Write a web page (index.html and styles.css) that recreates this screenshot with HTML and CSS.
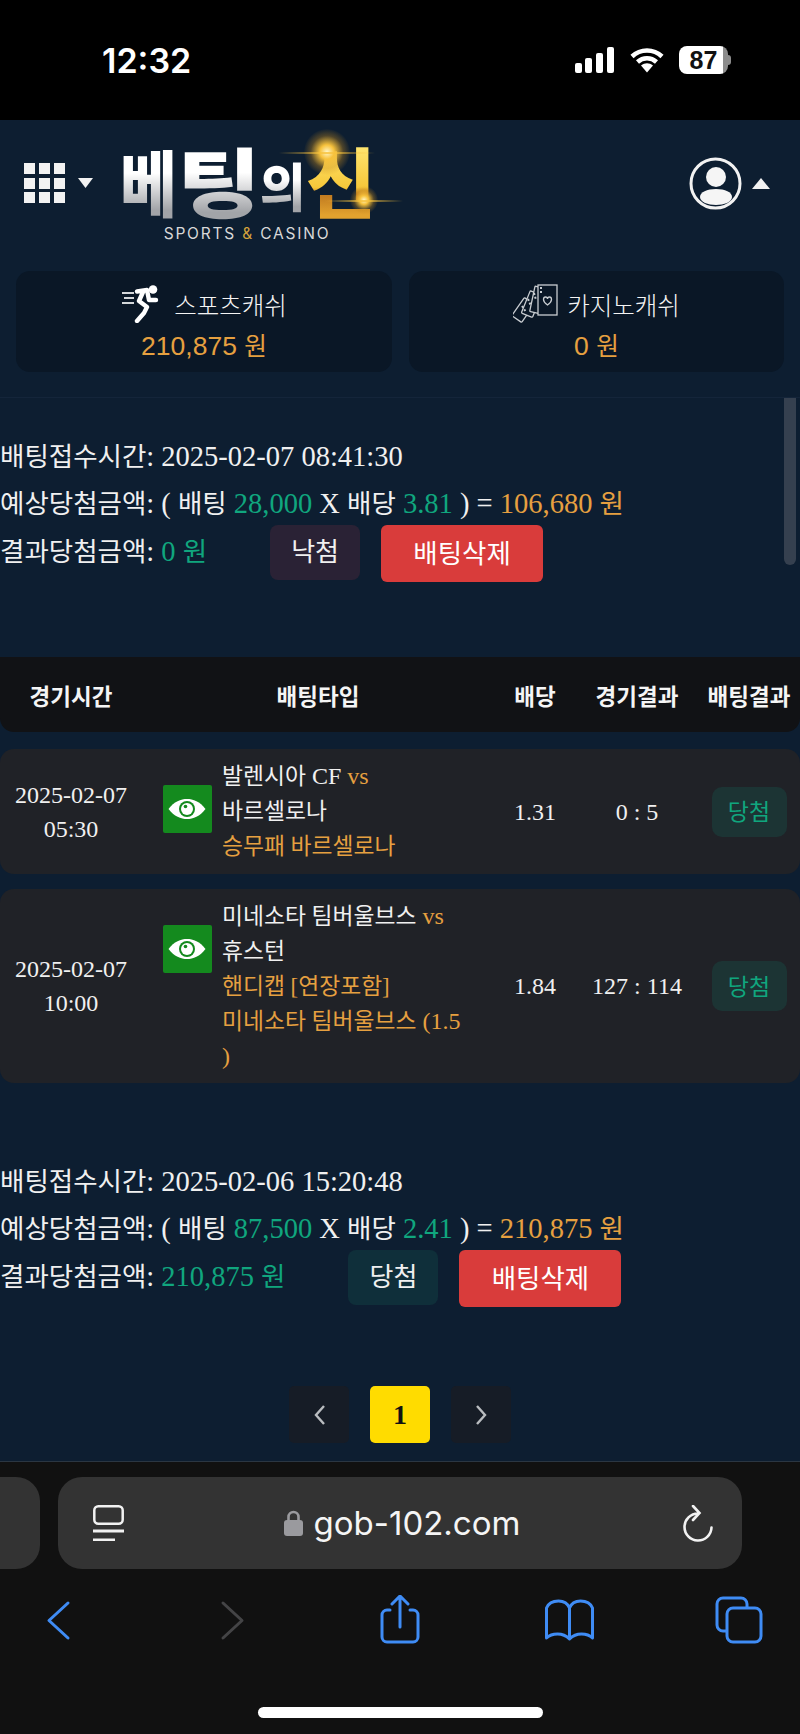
FILE: index.html
```html
<!DOCTYPE html>
<html lang="ko">
<head>
    <meta charset="UTF-8">
    <meta name="viewport" content="width=device-width, initial-scale=1.0">
    <title>베팅의 신 - 배팅내역</title>
    <link rel="stylesheet" href="styles.css">
</head>
<body>
    <div class="status-bar">
        <span class="clock">12:32</span>
        <div class="status-icons">
            <svg class="signal" width="39" height="26" viewBox="0 0 39 26"><rect x="0" y="16" width="7" height="10" rx="2"/><rect x="10" y="11" width="7" height="15" rx="2"/><rect x="21" y="6" width="7" height="20" rx="2"/><rect x="32" y="0" width="7" height="26" rx="2"/></svg>
            <svg class="wifi" width="34" height="26" viewBox="0 0 34 26"><path d="M2 9.500C10.500 1.500 23.500 1.500 32 9.500M7.500 15C13 10 21 10 26.500 15"/><path class="wifi-dot" d="M11 18.500C15 15.500 19 15.500 23 18.500L17 25.500Z"/></svg>
            <div class="battery"><span class="battery-level">87</span><i class="battery-cap"></i></div>
        </div>
    </div>

    <header class="top">
        <div class="menu">
            <svg width="41" height="40" viewBox="0 0 41 40"><path fill="#f2f2f2" d="M0 0h11v11H0zM15 0h11v11H15zM30 0h11v11H30zM0 15h11v11H0zM15 15h11v11H15zM30 15h11v11H30zM0 29h11v11H0zM15 29h11v11H15zM30 29h11v11H30z"/></svg>
            <svg width="15" height="10" viewBox="0 0 15 10"><path fill="#f2f2f2" d="M0 0h15L7.500 10z"/></svg>
        </div>
        <div class="logo">
            <div class="logo-word">
                <span class="lg lg-be">베</span><span class="lg lg-ting">팅</span><span class="lg lg-ui">의</span><span class="lg lg-sin">신</span>
            </div>
            <div class="logo-sub">SPORTS <b>&amp;</b> CASINO</div>
            <i class="spark spark-a"></i>
            <i class="spark spark-b"></i>
        </div>
        <div class="account">
            <svg width="53" height="53" viewBox="0 0 53 53"><circle cx="26.500" cy="26.500" r="24.500" fill="none" stroke="#f2f2f2" stroke-width="3"/><circle cx="27" cy="20" r="10" fill="#f5f5f5"/><path fill="#f5f5f5" d="M11 40c0-5 7-8 16-8s16 3 16 8c0 5-8 8-16 8s-16-3-16-8z"/></svg>
            <svg width="18" height="11" viewBox="0 0 18 11"><path fill="#f2f2f2" d="M0 11h18L9 0z"/></svg>
        </div>
    </header>

    <section class="wallet">
        <div class="wallet-card">
            <div class="wallet-label">
                <svg class="runner" width="38" height="38" viewBox="0 0 38 38"><circle cx="32" cy="4.500" r="4.300" fill="#fff"/><path fill="none" stroke="#fff" stroke-width="4.400" stroke-linejoin="round" stroke-linecap="round" d="M16 6.500l10-1.500 2 10h7M22 7l-4 9 8 6-3 6-7 8"/><path fill="none" stroke="#d4d7da" stroke-width="2" d="M1 8h12M3 13h10M1 18h12"/></svg>
                <span>스포츠캐쉬</span>
            </div>
            <div class="wallet-value">210,875 <span class="ko">원</span></div>
        </div>
        <div class="wallet-card">
            <div class="wallet-label">
                <svg class="cards" width="45" height="40" viewBox="0 0 45 40"><g fill="#0a1726" stroke="#c9cdd1" stroke-width="1.300"><rect x="-6" y="-11" width="12" height="22" rx="1" transform="translate(10 26) rotate(35)"/><rect x="-6" y="-13" width="12" height="24" rx="1" transform="translate(18 21) rotate(22)"/><rect x="-6" y="-14" width="12" height="26" rx="1" transform="translate(25 17) rotate(12)"/><rect x="25" y="1" width="19" height="30"/></g><path fill="none" stroke="#c9cdd1" stroke-width="1.300" d="M34.500 21c-6-4-4-8-2-8 1 0 2 1 2 2 0-1 1-2 2-2 2 0 4 4-2 8z"/><path stroke="#c9cdd1" stroke-width="2" stroke-dasharray="2 2" d="M28 3v6M9 22l4 6M15 15l3 7M21 9l2 7"/></svg>
                <span>카지노캐쉬</span>
            </div>
            <div class="wallet-value">0 <span class="ko">원</span></div>
        </div>
    </section>

    <main class="content">
        <div class="scrollbar"></div>

        <section class="bet-info">
            <p class="bet-line"><span class="ko">배팅접수시간</span>: 2025-02-07 08:41:30</p>
            <p class="bet-line"><span class="ko">예상당첨금액</span>: ( <span class="ko">배팅</span> <em class="green">28,000</em> X <span class="ko">배당</span> <em class="green">3.81</em> ) = <em class="orange">106,680 <span class="ko">원</span></em></p>
            <div class="bet-result">
                <p class="bet-line tall"><span class="ko">결과당첨금액</span>: <em class="green">0 <span class="ko">원</span></em></p>
                <span class="tag tag-lose">낙첨</span>
                <button class="del-btn">배팅삭제</button>
            </div>
        </section>

        <div class="table-head">
            <span>경기시간</span><span>배팅타입</span><span>배당</span><span>경기결과</span><span>배팅결과</span>
        </div>

        <div class="match">
            <div class="match-time">2025-02-07<br>05:30</div>
            <div class="match-type">
                <svg class="eye" width="49" height="48" viewBox="0 0 49 48"><rect width="49" height="48" rx="2" fill="#148a1e"/><path fill="#fff" d="M5.500 24C11 16.500 18 14 24 14s13 2.500 18.500 10C37 31.500 30 34 24 34S11 31.500 5.500 24z"/><circle cx="24" cy="24" r="8" fill="#148a1e"/><circle cx="24" cy="24" r="6" fill="#fff"/><circle cx="22.500" cy="21.500" r="1.800" fill="#148a1e"/></svg>
                <div class="match-names">
                    <span class="ko">발렌시아</span> CF <em class="orange">vs</em><br>
                    <span class="ko">바르셀로나</span><br>
                    <span class="orange"><span class="ko">승무패 바르셀로나</span></span>
                </div>
            </div>
            <div class="match-num">1.31</div>
            <div class="match-num">0 : 5</div>
            <div class="match-badge"><span class="tag tag-win">당첨</span></div>
        </div>

        <div class="match">
            <div class="match-time">2025-02-07<br>10:00</div>
            <div class="match-type">
                <svg class="eye" width="49" height="48" viewBox="0 0 49 48"><rect width="49" height="48" rx="2" fill="#148a1e"/><path fill="#fff" d="M5.500 24C11 16.500 18 14 24 14s13 2.500 18.500 10C37 31.500 30 34 24 34S11 31.500 5.500 24z"/><circle cx="24" cy="24" r="8" fill="#148a1e"/><circle cx="24" cy="24" r="6" fill="#fff"/><circle cx="22.500" cy="21.500" r="1.800" fill="#148a1e"/></svg>
                <div class="match-names">
                    <span class="ko">미네소타 팀버울브스</span> <em class="orange">vs</em><br>
                    <span class="ko">휴스턴</span><br>
                    <span class="orange"><span class="ko">핸디캡 [연장포함]</span><br>
                    <span class="ko">미네소타 팀버울브스</span> (1.5 )</span>
                </div>
            </div>
            <div class="match-num">1.84</div>
            <div class="match-num">127 : 114</div>
            <div class="match-badge"><span class="tag tag-win">당첨</span></div>
        </div>

        <section class="bet-info second">
            <p class="bet-line"><span class="ko">배팅접수시간</span>: 2025-02-06 15:20:48</p>
            <p class="bet-line"><span class="ko">예상당첨금액</span>: ( <span class="ko">배팅</span> <em class="green">87,500</em> X <span class="ko">배당</span> <em class="green">2.41</em> ) = <em class="orange">210,875 <span class="ko">원</span></em></p>
            <div class="bet-result">
                <p class="bet-line tall"><span class="ko">결과당첨금액</span>: <em class="green">210,875 <span class="ko">원</span></em></p>
                <span class="tag tag-won">당첨</span>
                <button class="del-btn">배팅삭제</button>
            </div>
        </section>

        <nav class="pager">
            <a class="page-btn"><svg width="13" height="22" viewBox="0 0 13 22"><path fill="none" stroke="#b9bcc0" stroke-width="2.400" d="M11 2L3 11l8 9"/></svg></a>
            <a class="page-btn current">1</a>
            <a class="page-btn"><svg width="13" height="22" viewBox="0 0 13 22"><path fill="none" stroke="#b9bcc0" stroke-width="2.400" d="M2 2l8 9-8 9"/></svg></a>
        </nav>
    </main>

    <footer class="safari">
        <div class="address-row">
            <div class="prev-tab"></div>
            <div class="address">
                <svg width="31" height="36" viewBox="0 0 31 36"><rect x="1.300" y="1.300" width="28.400" height="17.400" rx="4" fill="none" stroke="#f2f2f2" stroke-width="2.500"/><path stroke="#f2f2f2" stroke-width="2.800" d="M0 26h31M0 35h22"/></svg>
                <div class="url">
                    <svg width="19" height="26" viewBox="0 0 19 26"><path fill="none" stroke="#9a9a9e" stroke-width="2.600" d="M4.500 11V7a5 5 0 0 1 10 0v4"/><rect y="10" width="19" height="16" rx="3" fill="#9a9a9e"/></svg>
                    <span>gob-102.com</span>
                </div>
                <svg width="30" height="37" viewBox="0 0 30 37"><path fill="none" stroke="#f2f2f2" stroke-width="2.600" stroke-linecap="round" d="M15 8.500A13.500 13.500 0 1 0 28.500 22.500M10 1l6.500 7-6.500 7"/></svg>
            </div>
        </div>
        <div class="toolbar">
            <svg width="60" height="50" viewBox="0 0 60 50"><path fill="none" stroke="#3f8cf5" stroke-width="3" stroke-linecap="round" stroke-linejoin="round" d="M40 8L21 25.500 40 43"/></svg>
            <svg width="60" height="50" viewBox="0 0 60 50"><path fill="none" stroke="#444446" stroke-width="3" stroke-linecap="round" stroke-linejoin="round" d="M24 8l19 17.500L24 43"/></svg>
            <svg width="60" height="50" viewBox="0 0 60 50"><path fill="none" stroke="#3f8cf5" stroke-width="3" stroke-linecap="round" stroke-linejoin="round" d="M20 15h-3a5 5 0 0 0-5 5v22a5 5 0 0 0 5 5h26a5 5 0 0 0 5-5V20a5 5 0 0 0-5-5h-3M30 32V2M22 9l8-8 8 8"/></svg>
            <svg width="60" height="50" viewBox="0 0 60 50"><path fill="none" stroke="#3f8cf5" stroke-width="3" stroke-linejoin="round" d="M28.500 13c-2-5-6-7-11-7S7.500 8 5.500 13v30c3-3 7-4 11-4s9 2 12 5c3-3 8-5 12-5s8 1 11 4V13c-2-5-7-7-12-7s-9 2-11 7v31"/></svg>
            <svg width="60" height="50" viewBox="0 0 60 50"><g fill="none" stroke="#3f8cf5" stroke-width="3"><rect x="15" y="13" width="34" height="34" rx="6"/><path d="M14 36h-3a6 6 0 0 1-6-6V9a6 6 0 0 1 6-6h18a6 6 0 0 1 6 6v4"/></g></svg>
        </div>
        <div class="home-bar"></div>
    </footer>
</body>
</html>
```

FILE: styles.css
```css
* {
    box-sizing: border-box;
}
html, body {
    margin: 0;
    padding: 0;
}
body {
    width: 800px;
    height: 1734px;
    overflow: hidden;
    background: #0d1e31;
    color: #f0f0f0;
    font-family: "Liberation Serif", "Noto Sans CJK KR", serif;
    font-size: 28.500px;
}
em {
    font-style: normal;
}
p {
    margin: 0;
}
.ko {
    font-size: .93em;
}
.green {
    color: #10a67e;
}
.orange {
    color: #e6a040;
}

/* status bar */
.status-bar {
    height: 120px;
    background: #000;
    display: flex;
    align-items: center;
    justify-content: space-between;
    padding: 0 69px 0 102px;
}
.clock {
    font-family: Inter, "Liberation Sans", sans-serif;
    font-size: 34px;
    font-weight: 600;
    color: #fff;
}
.status-icons {
    display: flex;
    align-items: center;
    gap: 16px;
}
.signal {
    fill: #fff;
}
.wifi {
    fill: none;
    stroke: #fff;
    stroke-width: 4.500;
    margin-right: -1px;
}
.wifi-dot {
    fill: #fff;
    stroke: none;
}
.battery {
    width: 52px;
    height: 28px;
    display: flex;
    align-items: center;
}
.battery-level {
    width: 49px;
    height: 28px;
    border-radius: 8px;
    background: linear-gradient(90deg, #fff 90%, #8c8c8c 90%);
    color: #111;
    font-family: "Liberation Sans", sans-serif;
    font-size: 25px;
    font-weight: 700;
    line-height: 28px;
    text-align: center;
}
.battery-cap {
    width: 3px;
    height: 10px;
    border-radius: 0 3px 3px 0;
    background: #8c8c8c;
}

/* header */
.top {
    height: 126px;
    display: flex;
    align-items: center;
    padding: 0 30px 0 24px;
}
.menu {
    display: flex;
    align-items: center;
    gap: 13px;
}
.logo {
    position: relative;
    align-self: flex-start;
    width: 252px;
    margin-left: 27px;
    padding-top: 28px;
}
.logo-word {
    display: flex;
    align-items: center;
    height: 64px;
    font-family: "Noto Sans CJK KR", sans-serif;
    font-weight: 900;
    line-height: 1.2;
}
.lg {
    flex: none;
    background: linear-gradient(180deg, #fff 42%, #a2a4a8 85%);
    -webkit-background-clip: text;
    background-clip: text;
    color: transparent;
    transform-origin: 0 50%;
}
.lg-be {
    font-size: 72px;
    transform: scaleX(.86);
    margin-right: -9px;
}
.lg-ting {
    font-size: 76px;
    transform: scaleX(1.2);
    margin-right: 13px;
}
.lg-ui {
    font-size: 52px;
    transform: translateY(5px) scaleX(.95);
    margin-right: -2px;
}
.lg-sin {
    font-size: 76px;
    background-image: linear-gradient(180deg, #ffe56e 15%, #f6c83a 58%, #c07a20 66%, #e2a22e 88%);
}
.logo-sub {
    margin-top: 12px;
    text-align: center;
    padding-left: 2px;
    font-family: Inter, "Liberation Sans", sans-serif;
    font-size: 15.500px;
    letter-spacing: 1.800px;
    color: #d8d8d8;
    white-space: nowrap;
}
.logo-sub b {
    font-weight: 400;
    color: #d3a23c;
}
.spark {
    position: absolute;
    border-radius: 50%;
    background: radial-gradient(circle, #fff6c8 0%, #f7c23c 22%, rgba(200, 140, 30, .35) 50%, rgba(200, 140, 30, 0) 72%);
}
.spark-a {
    left: 184px;
    top: 9px;
    width: 46px;
    height: 46px;
}
.spark-b {
    left: 230px;
    top: 66px;
    width: 28px;
    height: 28px;
}
.spark::after {
    content: "";
    position: absolute;
    left: -25px;
    right: -25px;
    top: 50%;
    height: 2px;
    background: linear-gradient(90deg, rgba(247, 194, 60, 0), rgba(247, 194, 60, .8) 50%, rgba(247, 194, 60, 0));
}
.account {
    margin-left: auto;
    display: flex;
    align-items: center;
    gap: 10px;
}

/* cash cards */
.wallet {
    display: grid;
    grid-template-columns: 376px 375px;
    gap: 17px;
    margin: 25px 16px 0;
}
.wallet-card {
    height: 101px;
    padding-top: 12px;
    border-radius: 14px;
    background: #0a1726;
    text-align: center;
    font-family: "Liberation Sans", "Noto Sans CJK KR", sans-serif;
}
.wallet-label {
    display: flex;
    justify-content: center;
    align-items: center;
    gap: 15px;
    height: 42px;
    font-size: 24.500px;
    font-weight: 300;
    color: #f4f4f4;
}
.wallet-card + .wallet-card .wallet-label {
    gap: 9px;
}
.wallet-value {
    margin-top: 2px;
    font-size: 26.500px;
    line-height: 38px;
    color: #e6a040;
}

/* content */
.content {
    position: relative;
    height: 1064px;
    margin-top: 25px;
    padding-top: 36px;
    border-top: 1px solid #14253a;
}
.scrollbar {
    position: absolute;
    top: 0;
    right: 4px;
    width: 12px;
    height: 167px;
    border-radius: 0 0 6px 6px;
    background: #35404f;
}
.bet-line {
    line-height: 45.500px;
    white-space: nowrap;
}
.bet-line.tall {
    line-height: 54px;
}
.bet-result {
    display: flex;
    align-items: flex-start;
    margin-top: -2px;
}
.tag {
    display: flex;
    align-items: center;
    justify-content: center;
    font-family: "Noto Sans CJK KR", sans-serif;
    font-size: 26px;
}
.tag-lose, .tag-won {
    width: 90px;
    height: 55px;
    margin-left: 63px;
    padding-bottom: 6px;
    border-radius: 8px;
}
.tag-lose {
    background: #2a2235;
}
.tag-won {
    background: #0f2f3a;
}
.tag-win {
    width: 75px;
    height: 50px;
    padding-bottom: 3px;
    border-radius: 10px;
    background: #1c3434;
    color: #10a67e;
    font-size: 23px;
}
.del-btn {
    width: 162px;
    height: 57px;
    margin-left: 21px;
    padding: 0 0 4px;
    border: none;
    border-radius: 6px;
    background: #d93c3b;
    color: #fff;
    font-family: "Noto Sans CJK KR", sans-serif;
    font-size: 26.500px;
}

/* match table */
.table-head, .match {
    display: grid;
    grid-template-columns: 142px 352px 82px 122px 102px;
    text-align: center;
}
.table-head {
    height: 75px;
    margin-top: 75px;
    align-items: center;
    background: #111215;
    border-radius: 0 0 14px 14px;
    font-family: "Noto Sans CJK KR", sans-serif;
    font-size: 22.500px;
    font-weight: 700;
    color: #f5f5f5;
}
.match {
    align-items: center;
    margin-top: 15px;
    padding: 10px 0;
    background: #202227;
    border-radius: 14px;
    font-size: 24px;
    line-height: 34px;
}
.table-head + .match {
    margin-top: 17px;
}
.match-type {
    display: flex;
    align-items: flex-start;
    gap: 10px;
    padding: 0 20px 0 21px;
    text-align: left;
}
.eye {
    flex: none;
    margin-top: 26px;
}
.match-names .ko {
    font-size: .95em;
}
.match-badge {
    display: flex;
    justify-content: center;
}

/* second block + paging */
.second {
    margin-top: 76px;
}
.pager {
    display: flex;
    justify-content: center;
    gap: 21px;
    margin-top: 79px;
}
.page-btn {
    width: 60px;
    height: 57px;
    display: flex;
    align-items: center;
    justify-content: center;
    border-radius: 5px;
    background: #161c26;
}
.page-btn.current {
    background: #ffdc00;
    color: #111;
    font-weight: 700;
    font-size: 28px;
}

/* safari chrome */
.safari {
    height: 273px;
    background: #111;
    border-top: 1px solid #2b3642;
    padding-top: 15px;
}
.address-row {
    display: flex;
    gap: 18px;
}
.prev-tab {
    width: 40px;
    height: 92px;
    border-radius: 0 24px 24px 0;
    background: #333;
}
.address {
    width: 684px;
    height: 92px;
    display: flex;
    align-items: center;
    justify-content: space-between;
    padding: 0 29px 0 35px;
    border-radius: 24px;
    background: #333;
}
.url {
    display: flex;
    align-items: center;
    gap: 11px;
    margin-right: 3px;
    font-family: Inter, "Liberation Sans", sans-serif;
    font-size: 33px;
    color: #f5f5f5;
}
.toolbar {
    display: flex;
    justify-content: space-between;
    padding: 26px 28px 0;
}
.toolbar svg {
    display: block;
}
.home-bar {
    width: 285px;
    height: 11px;
    margin: 62px auto 0 258px;
    border-radius: 6px;
    background: #fff;
}
```
